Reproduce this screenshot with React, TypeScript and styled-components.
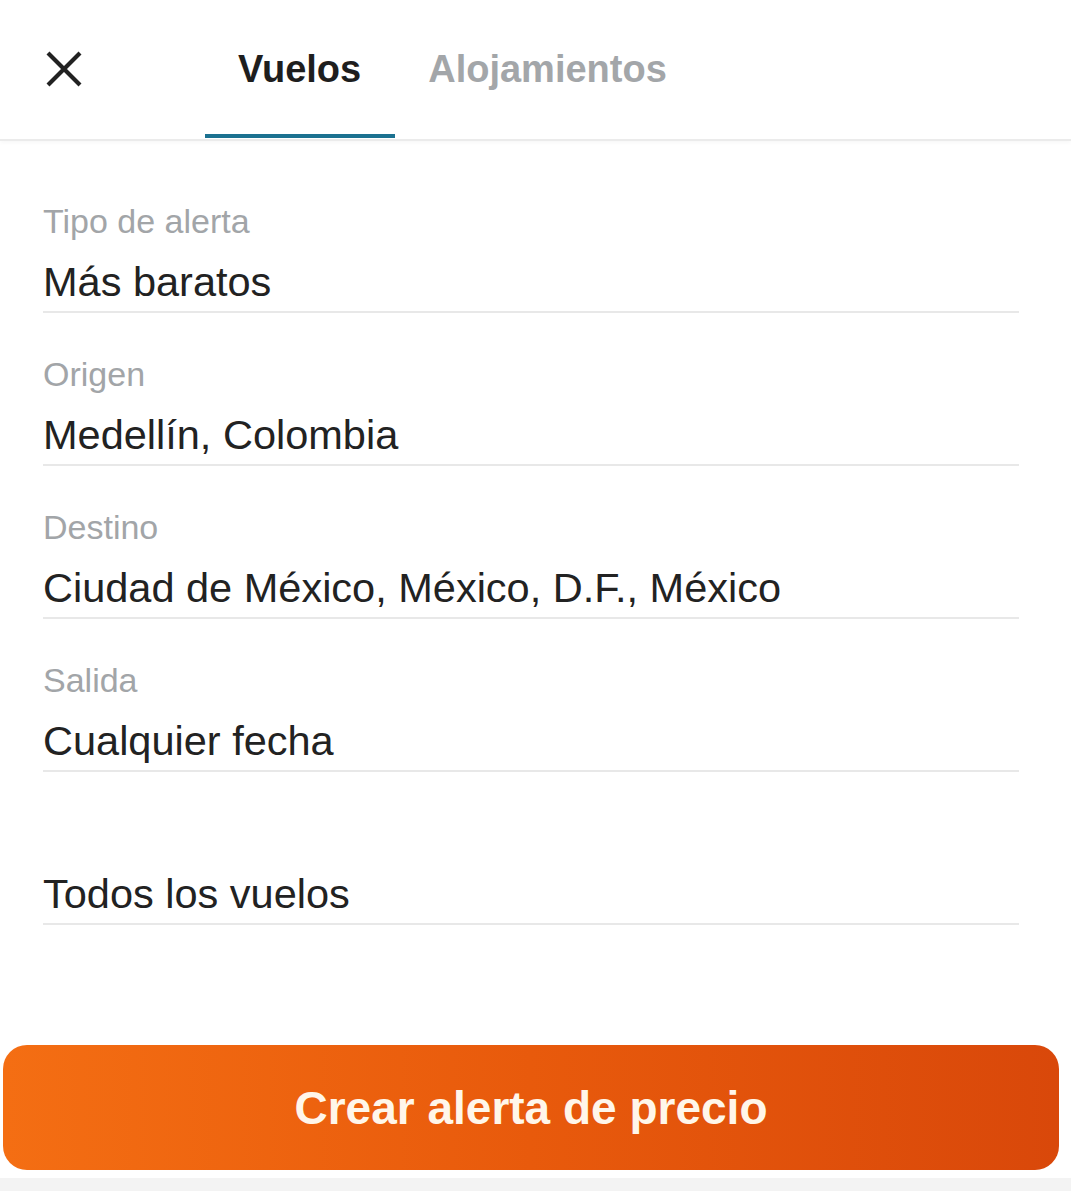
import React from 'react'
import styled, { createGlobalStyle } from 'styled-components'

const GlobalStyle = createGlobalStyle`
  html, body {
    margin: 0;
    padding: 0;
    background: #ffffff;
  }
  body {
    font-family: 'Liberation Sans', Arial, sans-serif;
    -webkit-font-smoothing: antialiased;
  }
`

const Page = styled.div`
  width: 1071px;
  min-height: 1191px;
  display: flex;
  flex-direction: column;
  background: #ffffff;
`

const Header = styled.header`
  height: 139px;
  display: flex;
  align-items: stretch;
  padding-left: 46px;
  border-bottom: 2px solid #ebebeb;
  box-shadow: 0 2px 4px rgba(0, 0, 0, 0.03);
`

const CloseButton = styled.button`
  width: 36px;
  height: 36px;
  align-self: center;
  margin: -2px 123px 0 0;
  padding: 0;
  border: none;
  background: none;
  display: flex;
  cursor: pointer;
`

const Tabs = styled.nav`
  display: flex;
`

const Tab = styled.div<{ $active?: boolean }>`
  display: flex;
  align-items: center;
  padding: 4px 34px 0 33px;
  margin-bottom: 1px;
  font-size: 38px;
  font-weight: 700;
  color: ${({ $active }) => ($active ? '#1e1e1e' : '#a3a6a9')};
  border-bottom: 4px solid ${({ $active }) => ($active ? '#1b7190' : 'transparent')};
`

const Form = styled.div`
  padding: 19px 52px 0 43px;
  display: flex;
  flex-direction: column;
`

const Field = styled.div`
  padding: 41px 0 5px;
  border-bottom: 2px solid #e8e8e8;
  display: flex;
  flex-direction: column;
  gap: 17px;
`

const Label = styled.div`
  font-size: 34px;
  line-height: 40px;
  height: 40px;
  color: #a2a5a8;
`

const Value = styled.div`
  font-size: 41.5px;
  line-height: 48px;
  color: #222222;
`

const ButtonWrap = styled.div`
  padding: 120px 12px 0 3px;
`

const PrimaryButton = styled.button`
  width: 100%;
  height: 125px;
  border: none;
  border-radius: 24px;
  background: linear-gradient(90deg, #f46e13 0%, #e85a0c 50%, #d9480a 100%);
  color: #fff6ea;
  font-family: 'Liberation Sans', Arial, sans-serif;
  font-size: 46px;
  font-weight: 700;
  cursor: pointer;
`

const BottomBar = styled.div`
  margin-top: 8px;
  flex: 1;
  background: #f3f3f3;
`

const fields = [
  { label: 'Tipo de alerta', value: 'Más baratos' },
  { label: 'Origen', value: 'Medellín, Colombia' },
  { label: 'Destino', value: 'Ciudad de México, México, D.F., México' },
  { label: 'Salida', value: 'Cualquier fecha' },
  { label: '', value: 'Todos los vuelos' },
]

const App = () => {
  return (
    <Page>
      <GlobalStyle />
      <Header>
        <CloseButton aria-label="Cerrar">
          <svg width="36" height="36" viewBox="0 0 36 36">
            <path d="M2 2 L34 34 M34 2 L2 34" stroke="#222" strokeWidth="4.2" fill="none" />
          </svg>
        </CloseButton>
        <Tabs>
          <Tab $active>Vuelos</Tab>
          <Tab>Alojamientos</Tab>
        </Tabs>
      </Header>
      <Form>
        {fields.map((f, i) => (
          <Field key={i}>
            <Label>{f.label}</Label>
            <Value>{f.value}</Value>
          </Field>
        ))}
      </Form>
      <ButtonWrap>
        <PrimaryButton>Crear alerta de precio</PrimaryButton>
      </ButtonWrap>
      <BottomBar />
    </Page>
  )
}

export default App
